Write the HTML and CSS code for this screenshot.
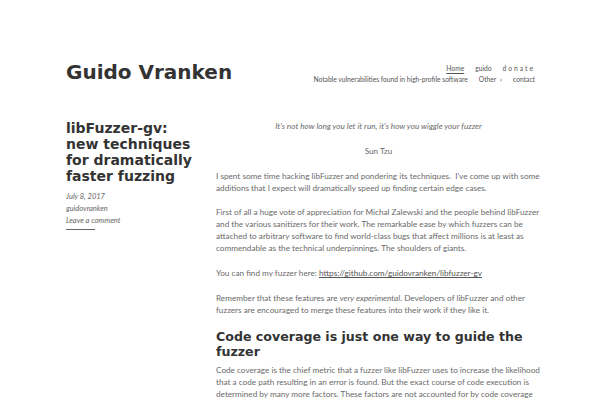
FILE: index.html
```html
<!DOCTYPE html>
<html>
<head>
<meta charset="utf-8">
<link rel="stylesheet" href="styles.css">
</head>
<body>
<div class="page">
  <header class="site-header">
    <h1 class="site-title">Guido Vranken</h1>
    <nav class="site-nav">
      <div class="nav-row">
        <a class="nav-link current">Home</a>
        <a class="nav-link">guido</a>
        <a class="nav-link spaced">donate</a>
      </div>
      <div class="nav-row">
        <a class="nav-link">Notable vulnerabilities found in high-profile software</a>
        <a class="nav-link">Other <span class="caret">›</span></a>
        <a class="nav-link">contact</a>
      </div>
    </nav>
  </header>
  <main class="post">
    <aside class="post-side">
      <h2 class="post-title">libFuzzer-gv: new techniques for dramatically faster fuzzing</h2>
      <div class="meta">
        <div>July 8, 2017</div>
        <div>guidovranken</div>
        <div>Leave a comment</div>
      </div>
      <div class="meta-rule"></div>
    </aside>
    <article class="post-body">
      <p class="quote">It's not how long you let it run, it's how you wiggle your fuzzer</p>
      <p class="center">Sun Tzu</p>
      <p>I spent some time hacking libFuzzer and pondering its techniques.&nbsp; I've come up with some additions that I expect will dramatically speed up finding certain edge cases.</p>
      <p>First of all a huge vote of appreciation for Michal Zalewski and the people behind libFuzzer and the various sanitizers for their work. The remarkable ease by which fuzzers can be attached to arbitrary software to find world-class bugs that affect millions is at least as commendable as the technical underpinnings. The shoulders of giants.</p>
      <p>You can find my fuzzer here: <a class="link">https://github.com/guidovranken/libfuzzer-gv</a></p>
      <p>Remember that these features are <em>very experimental</em>. Developers of libFuzzer and other fuzzers are encouraged to merge these features into their work if they like it.</p>
      <h3 class="section">Code coverage is just one way to guide the fuzzer</h3>
      <p>Code coverage is the chief metric that a fuzzer like libFuzzer uses to increase the likelihood that a code path resulting in an error is found. But the exact course of code execution is determined by many more factors. These factors are not accounted for by code coverage metrics alone, so it would make sense to include them.</p>
    </article>
  </main>
</div>
</body>
</html>
```
FILE: styles.css
```css
html, body {
  margin: 0;
  padding: 0;
  background: #fff;
}
body {
  font-family: Lato, "Open Sans", sans-serif;
  color: #6a6a6a;
  font-size: 8.2px;
}
.page {
  width: 478px;
  margin-left: 66px;
  padding-top: 58px;
  height: 342px;
  overflow: hidden;
}
.site-header {
  display: flex;
  justify-content: space-between;
  align-items: flex-start;
  width: 474px;
}
.site-title {
  font-family: "DejaVu Sans", sans-serif;
  font-weight: bold;
  font-size: 20px;
  line-height: 28px;
  color: #333;
  margin: 0;
}
.site-nav {
  margin-top: 5px;
  margin-right: 5px;
  display: flex;
  flex-direction: column;
  align-items: flex-end;
}
.nav-row {
  display: flex;
  gap: 11px;
  line-height: 11px;
}
.nav-link {
  color: #555;
  font-size: 6.7px;
}
.nav-link.current {
  text-decoration: underline;
  text-underline-offset: 2px;
}
.nav-link.spaced {
  letter-spacing: 2px;
}
.caret {
  font-size: 8px;
  margin-left: 2px;
}
.post {
  display: flex;
  gap: 18px;
  margin-top: 34px;
}
.post-side {
  width: 132px;
  flex-shrink: 0;
}
.post-title {
  font-family: "DejaVu Sans", sans-serif;
  font-weight: bold;
  font-size: 14px;
  line-height: 16px;
  color: #333;
  margin: 0;
}
.meta {
  margin-top: 7px;
  font-style: italic;
  font-size: 7.5px;
  line-height: 12px;
  color: #666;
}
.meta-rule {
  width: 29px;
  border-top: 1px solid #666;
  margin-top: 2px;
}
.post-body {
  width: 331px;
  flex-shrink: 0;
  line-height: 12px;
}
.post-body p {
  margin: 0 0 12.8px;
}
.quote {
  text-align: center;
  font-style: italic;
  padding-right: 6px;
}
.center {
  text-align: center;
  padding-right: 6px;
}
.link {
  color: #555;
  text-decoration: underline;
}
.section {
  font-family: "DejaVu Sans", sans-serif;
  font-weight: bold;
  font-size: 12.6px;
  line-height: 15px;
  color: #333;
  margin: 12px 0 5px;
}
```
